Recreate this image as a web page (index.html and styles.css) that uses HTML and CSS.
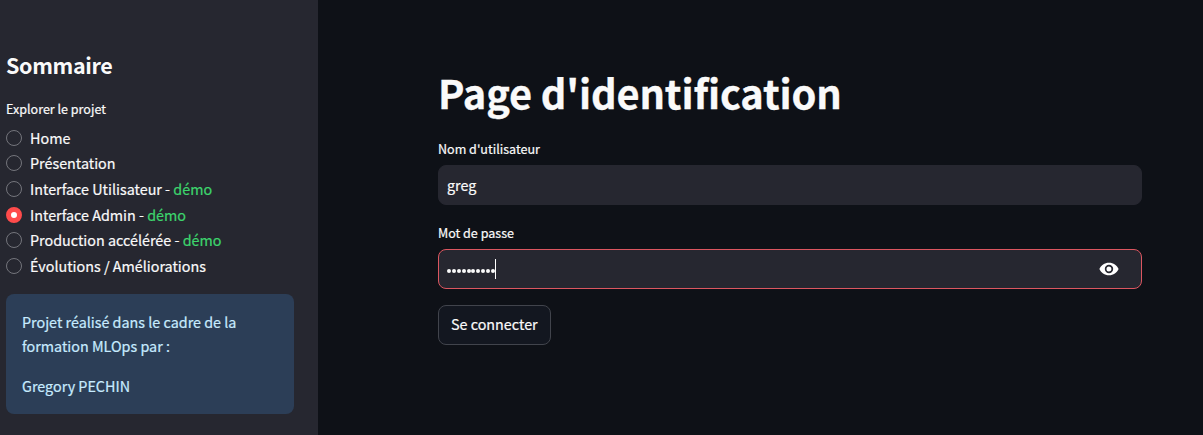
FILE: index.html
```html
<!DOCTYPE html>
<html lang="fr">
<head>
<meta charset="utf-8">
<title>Page d'identification</title>
<link rel="stylesheet" href="styles.css">
</head>
<body>
<div class="app">
  <aside class="sidebar">
    <h2 class="sidebar-title">Sommaire</h2>
    <div class="label">Explorer le projet</div>
    <div class="options">
      <div class="option"><span class="radio"></span><span>Home</span></div>
      <div class="option"><span class="radio"></span><span>Présentation</span></div>
      <div class="option"><span class="radio"></span><span>Interface Utilisateur - <em class="demo">démo</em></span></div>
      <div class="option"><span class="radio checked"></span><span>Interface Admin - <em class="demo">démo</em></span></div>
      <div class="option"><span class="radio"></span><span>Production accélérée - <em class="demo">démo</em></span></div>
      <div class="option"><span class="radio"></span><span>Évolutions / Améliorations</span></div>
    </div>
    <div class="info">
      <p>Projet réalisé dans le cadre de la<br>formation MLOps par :</p>
      <p>Gregory PECHIN</p>
    </div>
  </aside>
  <main class="main">
    <h1 class="title">Page d'identification</h1>
    <div class="label">Nom d'utilisateur</div>
    <div class="field">greg</div>
    <div class="label second">Mot de passe</div>
    <div class="field focused">
      <span class="dots"><i></i><i></i><i></i><i></i><i></i><i></i><i></i><i></i><i></i><i></i></span><span class="caret"></span>
      <svg class="eye" viewBox="0 0 20 14" width="20" height="14"><path fill="#fff" fill-rule="evenodd" d="M10 .7C5.600.7 1.900 3.300.4 7c1.500 3.700 5.200 6.300 9.600 6.300s8.100-2.600 9.600-6.300C18.100 3.300 14.400.7 10 .7zm0 10.500a4.200 4.200 0 1 1 0-8.400 4.200 4.200 0 0 1 0 8.400zm0-6.700a2.500 2.500 0 1 0 0 5 2.500 2.500 0 0 0 0-5z"/></svg>
    </div>
    <button class="button">Se connecter</button>
  </main>
</div>
</body>
</html>
```
FILE: styles.css
```css
* { box-sizing: border-box; }
body {
  margin: 0;
  background: #0e1117;
  color: #fafafa;
  font: 14.35px/24px "Noto Sans CJK SC", "Noto Sans", sans-serif;
  -webkit-text-stroke: 0.2px currentColor;
}
.app { display: flex; height: 435px; overflow: hidden; }
.sidebar { width: 318px; background: #262730; padding: 50px 24px 0 6px; }
.sidebar-title {
  margin: 0;
  font-size: 21.5px;
  line-height: 29px;
  font-weight: 700;
  letter-spacing: -0.35px;
  -webkit-text-stroke: 0;
}
.label { font-size: 12.55px; line-height: 20px; white-space: nowrap; }
.sidebar .label { margin-top: 20px; }
.options { margin-top: 6px; }
.option { display: flex; align-items: center; gap: 8px; height: 25.6px; white-space: nowrap; }
.radio {
  width: 16px;
  height: 16px;
  border: 1px solid #74757c;
  border-radius: 50%;
  flex: none;
}
.radio.checked { border: 5px solid #ff4b4b; background: #fff; }
.demo { font-style: normal; color: #3dd56d; }
.info {
  margin-top: 15px;
  height: 120px;
  padding: 16px;
  border-radius: 8px;
  background: #2c3e57;
  color: #c7ebff;
  white-space: nowrap;
}
.info p { margin: 0 0 16px; }
.main { flex: 1; padding: 65px 61px 0 120px; }
.title {
  margin: 0;
  font-size: 39.8px;
  line-height: 53px;
  font-weight: 700;
  letter-spacing: -0.15px;
  white-space: nowrap;
  -webkit-text-stroke: 0.3px currentColor;
}
.main .label { margin-top: 21px; }
.main .label.second { margin-top: 18px; }
.field {
  display: flex;
  align-items: center;
  height: 40px;
  margin-top: 6px;
  padding: 0 22px 0 8px;
  border: 1px solid #262730;
  border-radius: 8px;
  background: #262730;
}
.focused { border-color: #db5660; }
.dots { display: flex; gap: 0.9px; padding-top: 3px; }
.dots i { width: 4px; height: 4px; border-radius: 50%; background: #fafafa; }
.caret { width: 1px; height: 20px; background: #fff; }
.eye { margin-left: auto; }
.button {
  display: block;
  height: 40px;
  margin-top: 16px;
  padding: 0 12px 2px;
  border: 1px solid #41444c;
  border-radius: 8px;
  background: #131720;
  color: #fafafa;
  font: inherit;
  -webkit-text-stroke: inherit;
}
```
